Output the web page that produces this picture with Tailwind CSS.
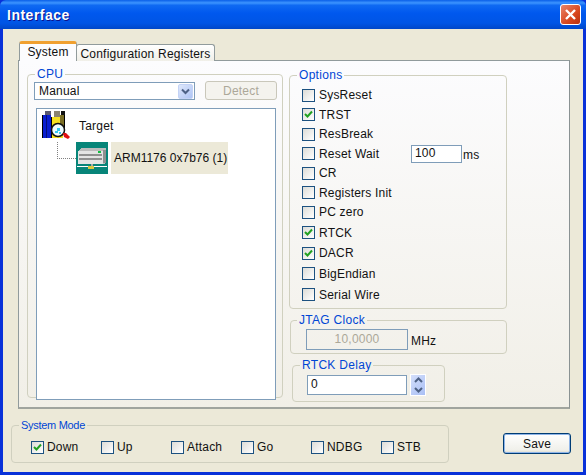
<!DOCTYPE html>
<html lang="en">

<head>
    <meta charset="UTF-8">
    <title>Interface</title>
    <script src="https://cdn.jsdelivr.net/npm/@tailwindcss/browser@4"></script>
</head>

<body class="bg-[#ece9d8] font-['Liberation_Sans',sans-serif] text-[12px] leading-[14px] tracking-[0.2px] text-[#111]">
    <div class="w-[586px] h-[475px] flex flex-col overflow-hidden bg-[#0831d9]">
        <!-- title bar -->
        <div class="h-[29px] shrink-0 flex items-center justify-between pl-[7px] pr-[5px] rounded-t-[6px] bg-[linear-gradient(180deg,#0a5fe8_0%,#3d95ff_10%,#0f6af2_18%,#0058ee_45%,#0055e5_80%,#0047c8_100%)]">
            <span class="font-bold text-[14px] tracking-[0.5px] text-white [text-shadow:1px_1px_0_#0f1089]">Interface</span>
            <button class="w-[21px] h-[21px] rounded-[3px] border border-white bg-[linear-gradient(135deg,#e8856a,#d9481f_60%,#b8300f)] flex items-center justify-center">
                <svg width="13" height="13" viewBox="0 0 13 13"><path d="M2 2L11 11M11 2L2 11" stroke="#fff" stroke-width="2.4" /></svg>
            </button>
        </div>

        <!-- dialog body -->
        <div class="relative flex-1 ml-[3px] mr-[3px] mb-[3px] bg-[#ece9d8] flex flex-col">
            <div class="h-[13px] shrink-0"></div>
            <!-- tabs -->
            <div class="flex items-end h-[19px] pl-[16px] shrink-0 relative z-10 -mb-px">
                <div class="w-[58px] h-[20px] bg-[#fcfcfe] border-x border-[#919b9c] border-t-[3px] border-t-[#f0a030] rounded-t-[3px] text-center pt-[1px]">System</div>
                <div class="w-[139px] h-[17px] bg-[linear-gradient(180deg,#fff,#f0efe8)] border border-[#919b9c] border-b-0 rounded-t-[3px] text-center pt-[2px] -ml-px whitespace-nowrap">Configuration Registers</div>
            </div>

            <!-- tab panel -->
            <div class="ml-[15px] w-[552px] h-[349px] shrink-0 border border-[#919b9c] border-r-[#8a9293] border-b-2 border-b-[#a0a49e] bg-[linear-gradient(180deg,#fcfcfe,#f1efe7)] flex pl-[8px] pt-[8px]">
                <!-- CPU -->
                <fieldset class="w-[256px] h-[331px] border border-[#d0d0bf] rounded-[4px] -mt-[2px]">
                    <legend class="ml-[7px] px-[2px] text-[#0046d5] tracking-[0.3px] leading-[14px]">CPU</legend>
                    <div class="flex items-start mt-[1px] ml-[6px]">
                        <div class="w-[161px] h-[18px] bg-white border border-[#7f9db9] flex items-center justify-between pl-[4px] pr-[1px]">
                            <span>Manual</span>
                            <span class="w-[15px] h-[15px] rounded-[2px] bg-[linear-gradient(135deg,#dfe8fb,#aec4f5)] border border-[#c4d3f6] flex items-center justify-center">
                                <svg width="9" height="7" viewBox="0 0 9 7"><path d="M1 1.5L4.5 5L8 1.5" fill="none" stroke="#4d6185" stroke-width="2" /></svg>
                            </span>
                        </div>
                        <button class="ml-[10px] -mt-px w-[72px] h-[19px] border border-[#c9c7ba] rounded-[3px] bg-[#f4f3ee] text-[#aca899] text-center">Detect</button>
                    </div>
                    <!-- tree -->
                    <div class="ml-[8px] mt-[8px] w-[240px] h-[292px] bg-white border border-[#7f9db9] pl-[3px] pt-[1px]">
                        <div class="flex items-center h-[32px]">
                            <svg width="32" height="32" viewBox="0 0 32 32" shape-rendering="crispEdges">
                                <rect x="5" y="1" width="6" height="5" fill="#5a5a70" />
                                <rect x="14" y="1" width="6" height="6" fill="#8a8470" />
                                <rect x="21" y="1" width="4" height="6" fill="#111" />
                                <rect x="2" y="5" width="9" height="23" fill="#0a1fd0" />
                                <rect x="2" y="5" width="1" height="23" fill="#000" />
                                <rect x="6" y="5" width="1" height="23" fill="#06107a" />
                                <rect x="11" y="7" width="12" height="21" fill="#f5e020" />
                                <rect x="11" y="7" width="1" height="21" fill="#000" />
                                <rect x="20" y="5" width="5" height="16" fill="#7a6e24" />
                                <rect x="24" y="5" width="1" height="16" fill="#000" />
                                <circle cx="18" cy="20" r="6.5" fill="#eefcff" stroke="#111" stroke-width="1.5" shape-rendering="auto" />
                                <rect x="17" y="18" width="3" height="3" fill="#35c8ee" />
                                <rect x="15" y="21" width="3" height="2" fill="#35c8ee" />
                                <rect x="19" y="22" width="2" height="2" fill="#35c8ee" />
                                <path d="M23 23L26 23L30 27L28 29L24 27Z" fill="#e01010" shape-rendering="auto" />
                            </svg>
                            <span class="ml-[7px]">Target</span>
                        </div>
                        <div class="flex items-start">
                            <div class="ml-[17px] w-[19px] h-[17px] border-l border-b border-dotted border-[#808080]"></div>
                            <svg width="32" height="32" viewBox="0 0 32 32" shape-rendering="crispEdges">
                                <rect width="32" height="32" fill="#078579" />
                                <rect x="1" y="24" width="30" height="1" fill="#fff" />
                                <rect x="15" y="21" width="2" height="3" fill="#aaa" />
                                <rect x="12" y="24" width="6" height="3" fill="#d8c840" />
                                <path d="M2 9L5 6H30V20L28 22H2Z" fill="#bcbcbc" />
                                <rect x="2" y="9" width="25" height="13" fill="#e4e4e4" />
                                <rect x="3" y="12" width="23" height="2" fill="#909090" />
                                <rect x="3" y="16" width="23" height="2" fill="#909090" />
                                <rect x="22" y="9" width="3" height="2" fill="#10c040" />
                                <rect x="27" y="8" width="3" height="13" fill="#909090" />
                            </svg>
                            <span class="ml-[3px] h-[32px] w-[117px] bg-[#ece9d8] leading-[32px] pl-[3px] whitespace-nowrap tracking-normal">ARM1176 0x7b76 (1)</span>
                        </div>
                    </div>
                </fieldset>

                <!-- right column -->
                <div class="ml-[6px] w-[218px]">
                    <fieldset class="h-[241px] border border-[#d0d0bf] rounded-[4px] mt-[-1px]">
                        <legend class="ml-[7px] px-[2px] text-[#0046d5] tracking-[0.3px] leading-[14px]">Options</legend>
                        <div class="pl-[12px] pt-[3px]">
                            <div class="h-[20px] flex items-center"><i class="w-[13px] h-[13px] border border-[#1c5180] bg-[linear-gradient(135deg,#dcdcd7,#fff)]"></i><span class="ml-[4px]">SysReset</span></div>
                            <label class="h-[19px] flex items-center"><svg class="w-[13px] h-[13px] border border-[#1c5180] bg-[linear-gradient(135deg,#dcdcd7,#fff)]" viewBox="0 0 11 11"><path d="M2 5L4.5 7.5L9 2.5" fill="none" stroke="#21a121" stroke-width="2" /></svg><span class="ml-[4px]">TRST</span></label>
                            <div class="h-[20px] flex items-center"><i class="w-[13px] h-[13px] border border-[#1c5180] bg-[linear-gradient(135deg,#dcdcd7,#fff)]"></i><span class="ml-[4px]">ResBreak</span></div>
                            <div class="h-[19px] flex items-center"><i class="w-[13px] h-[13px] border border-[#1c5180] bg-[linear-gradient(135deg,#dcdcd7,#fff)]"></i><span class="ml-[4px] w-[92px]">Reset Wait</span><span class="w-[51px] h-[18px] bg-white border border-[#7f9db9] pl-[3px] leading-[14px]">100</span><span class="ml-[1px] mt-[3px]">ms</span></div>
                            <div class="h-[20px] flex items-center"><i class="w-[13px] h-[13px] border border-[#1c5180] bg-[linear-gradient(135deg,#dcdcd7,#fff)]"></i><span class="ml-[4px]">CR</span></div>
                            <div class="h-[19px] flex items-center"><i class="w-[13px] h-[13px] border border-[#1c5180] bg-[linear-gradient(135deg,#dcdcd7,#fff)]"></i><span class="ml-[4px]">Registers Init</span></div>
                            <div class="h-[20px] flex items-center"><i class="w-[13px] h-[13px] border border-[#1c5180] bg-[linear-gradient(135deg,#dcdcd7,#fff)]"></i><span class="ml-[4px]">PC zero</span></div>
                            <label class="h-[21px] flex items-center"><svg class="w-[13px] h-[13px] border border-[#1c5180] bg-[linear-gradient(135deg,#dcdcd7,#fff)]" viewBox="0 0 11 11"><path d="M2 5L4.5 7.5L9 2.5" fill="none" stroke="#21a121" stroke-width="2" /></svg><span class="ml-[4px]">RTCK</span></label>
                            <label class="h-[20px] flex items-center"><svg class="w-[13px] h-[13px] border border-[#1c5180] bg-[linear-gradient(135deg,#dcdcd7,#fff)]" viewBox="0 0 11 11"><path d="M2 5L4.5 7.5L9 2.5" fill="none" stroke="#21a121" stroke-width="2" /></svg><span class="ml-[4px]">DACR</span></label>
                            <div class="h-[21px] flex items-center"><i class="w-[13px] h-[13px] border border-[#1c5180] bg-[linear-gradient(135deg,#dcdcd7,#fff)]"></i><span class="ml-[4px]">BigEndian</span></div>
                            <div class="h-[21px] flex items-center"><i class="w-[13px] h-[13px] border border-[#1c5180] bg-[linear-gradient(135deg,#dcdcd7,#fff)]"></i><span class="ml-[4px]">Serial Wire</span></div>
                        </div>
                    </fieldset>

                    <fieldset class="h-[41px] mt-[4px] ml-px border border-[#d0d0bf] rounded-[4px]">
                        <legend class="ml-[6px] px-[2px] text-[#0046d5] tracking-[0.3px] leading-[14px]">JTAG Clock</legend>
                        <div class="flex items-center mt-[2px] ml-[15px]">
                            <span class="w-[102px] h-[21px] border border-[#7f9db9] text-center text-[#aca899] leading-[18px]">10,0000</span>
                            <span class="ml-[3px] mt-[2px]">MHz</span>
                        </div>
                    </fieldset>

                    <fieldset class="h-[44px] mt-[4px] ml-[3px] w-[153px] border border-[#d0d0bf] rounded-[4px]">
                        <legend class="ml-[7px] px-[2px] text-[#0046d5] tracking-[0.3px] leading-[14px]">RTCK Delay</legend>
                        <div class="flex items-center mt-[2px] ml-[14px]">
                            <span class="w-[100px] h-[20px] bg-white border border-[#7f9db9] pl-[3px] leading-[16px]">0</span>
                            <span class="ml-[3px] w-[16px] h-[22px] border border-white bg-[linear-gradient(135deg,#d4dffb,#a9bff5)] flex flex-col items-center justify-around">
                                <svg width="9" height="6" viewBox="0 0 9 6"><path d="M1 5L4.5 1.5L8 5" fill="none" stroke="#4d6185" stroke-width="2" /></svg>
                                <svg width="9" height="6" viewBox="0 0 9 6"><path d="M1 1L4.5 4.5L8 1" fill="none" stroke="#4d6185" stroke-width="2" /></svg>
                            </span>
                        </div>
                    </fieldset>
                </div>
            </div>

            <!-- bottom row -->
            <div class="flex items-start mt-[9px] ml-[8px] shrink-0">
                <fieldset class="w-[438px] h-[45px] border border-[#d0d0bf] rounded-[4px]">
                    <legend class="ml-[7px] px-[2px] text-[#0046d5] text-[11px] tracking-[-0.3px] leading-[14px]">System Mode</legend>
                    <div class="flex items-center h-[20px] mt-[5px] pl-[19px]">
                        <label class="w-[70px] flex items-center"><svg class="w-[13px] h-[13px] border border-[#1c5180] bg-[linear-gradient(135deg,#dcdcd7,#fff)]" viewBox="0 0 11 11"><path d="M2 5L4.5 7.5L9 2.5" fill="none" stroke="#21a121" stroke-width="2" /></svg><span class="ml-[3px]">Down</span></label>
                        <div class="w-[70px] flex items-center"><i class="w-[13px] h-[13px] border border-[#1c5180] bg-[linear-gradient(135deg,#dcdcd7,#fff)]"></i><span class="ml-[3px]">Up</span></div>
                        <div class="w-[70px] flex items-center"><i class="w-[13px] h-[13px] border border-[#1c5180] bg-[linear-gradient(135deg,#dcdcd7,#fff)]"></i><span class="ml-[3px]">Attach</span></div>
                        <div class="w-[70px] flex items-center"><i class="w-[13px] h-[13px] border border-[#1c5180] bg-[linear-gradient(135deg,#dcdcd7,#fff)]"></i><span class="ml-[3px]">Go</span></div>
                        <div class="w-[70px] flex items-center"><i class="w-[13px] h-[13px] border border-[#1c5180] bg-[linear-gradient(135deg,#dcdcd7,#fff)]"></i><span class="ml-[3px]">NDBG</span></div>
                        <div class="flex items-center"><i class="w-[13px] h-[13px] border border-[#1c5180] bg-[linear-gradient(135deg,#dcdcd7,#fff)]"></i><span class="ml-[3px]">STB</span></div>
                    </div>
                </fieldset>
                <button class="ml-[54px] mt-[15px] w-[68px] h-[21px] rounded-[3px] border border-[#003c74] ring-1 ring-inset ring-[#8fb5e8] bg-[linear-gradient(180deg,#fff,#f0f0ea_85%,#dcd8c8)] text-center leading-[16px]">Save</button>
            </div>
        </div>
    </div>
</body>

</html>
